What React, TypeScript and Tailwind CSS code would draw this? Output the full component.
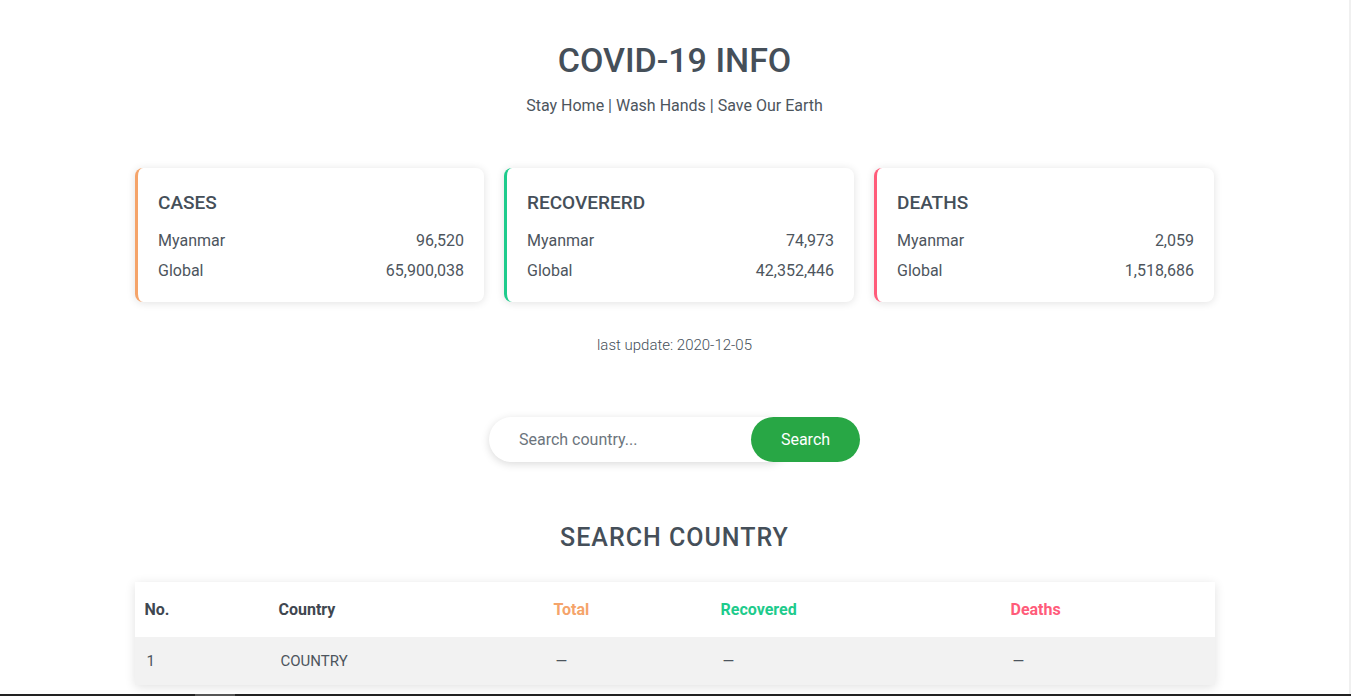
import React from 'react';

type Stat = {
  title: string;
  myanmar: string;
  global: string;
  border: string;
  width: string;
};

const stats: Stat[] = [
  { title: 'CASES', myanmar: '96,520', global: '65,900,038', border: 'border-[#f5a46a]', width: 'w-[349px]' },
  { title: 'RECOVERERD', myanmar: '74,973', global: '42,352,446', border: 'border-[#1ecb8c]', width: 'w-[350px]' },
  { title: 'DEATHS', myanmar: '2,059', global: '1,518,686', border: 'border-[#ff5c7a]', width: 'w-[340px]' },
];

const StatCard: React.FC<{ stat: Stat }> = ({ stat }) => (
  <div
    className={`${stat.width} ${stat.border} border-l-[3px] rounded-[8px] bg-white px-[20px] pt-[21px] pb-[19px] shadow-[0_1px_8px_rgba(0,0,0,0.12)]`}
  >
    <h3 className="text-[19px] leading-[27px] font-medium text-[#454f59]">{stat.title}</h3>
    <div className="mt-[13px] flex justify-between text-[16px] leading-[24px] text-[#4d555d]">
      <span>Myanmar</span>
      <span>{stat.myanmar}</span>
    </div>
    <div className="mt-[6px] flex justify-between text-[16px] leading-[24px] text-[#4d555d]">
      <span>Global</span>
      <span>{stat.global}</span>
    </div>
  </div>
);

const App: React.FC = () => {
  return (
    <div className="min-h-screen bg-white font-['Roboto','Liberation_Sans',sans-serif] pr-[2px]">
      <div className="flex flex-col items-center pt-[41px] pb-[40px]">
        <h1 className="text-[34px] leading-[38px] font-medium text-[#454f59]">COVID-19 INFO</h1>
        <p className="mt-[15px] text-[16px] leading-[24px] text-[#4d555d]">
          Stay Home | Wash Hands | Save Our Earth
        </p>

        <div className="mt-[50px] flex gap-[20px]">
          {stats.map(s => (
            <StatCard key={s.title} stat={s} />
          ))}
        </div>

        <p className="mt-[33px] text-[15px] leading-[20px] font-light text-[#454f59]">last update: 2020-12-05</p>

        <div className="mt-[62px] flex items-center">
          <input
            type="text"
            placeholder="Search country..."
            className="w-[300px] h-[45px] rounded-full bg-white pl-[30px] pr-[45px] text-[16px] text-[#495057] placeholder:text-[#6c757d] outline-none shadow-[0_2px_8px_rgba(0,0,0,0.15)]"
          />
          <button className="-ml-[38px] h-[45px] w-[109px] rounded-full bg-[#28a745] text-[16px] text-white">
            Search
          </button>
        </div>

        <h2 className="mt-[61px] text-[25px] leading-[30px] font-medium tracking-[1px] text-[#454f59]">
          SEARCH COUNTRY
        </h2>

        <div className="mt-[29px] w-[1080px] bg-white shadow-[0_2px_10px_rgba(0,0,0,0.12)]">
          <table className="w-full table-fixed border-collapse">
            <colgroup>
              <col className="w-[134px]" />
              <col className="w-[275px]" />
              <col className="w-[167px]" />
              <col className="w-[290px]" />
              <col />
            </colgroup>
            <thead>
              <tr className="h-[55px] text-left text-[16px] font-bold">
                <th className="pl-[10px] text-[#3f4750]">No.</th>
                <th className="pl-[10px] text-[#3f4750]">Country</th>
                <th className="pl-[10px] text-[#f5a46a]">Total</th>
                <th className="pl-[10px] text-[#1ecb8c]">Recovered</th>
                <th className="pl-[10px] text-[#ff5c7a]">Deaths</th>
              </tr>
            </thead>
            <tbody>
              <tr className="h-[48px] bg-[#f2f2f2] text-[15px] text-[#4d555d]">
                <td className="pl-[12px]">1</td>
                <td className="pl-[12px]">COUNTRY</td>
                <td className="pl-[12px]">—</td>
                <td className="pl-[12px]">—</td>
                <td className="pl-[12px]">—</td>
              </tr>
            </tbody>
          </table>
        </div>
      </div>

      <div className="fixed top-0 right-0 h-screen w-[2px] bg-[#f0f0f0]" />
      <div className="fixed bottom-0 left-0 flex h-[2px] w-full bg-[#222222]">
        <div className="ml-[195px] h-full w-[40px] bg-[#555555]" />
      </div>
    </div>
  );
};

export default App;
